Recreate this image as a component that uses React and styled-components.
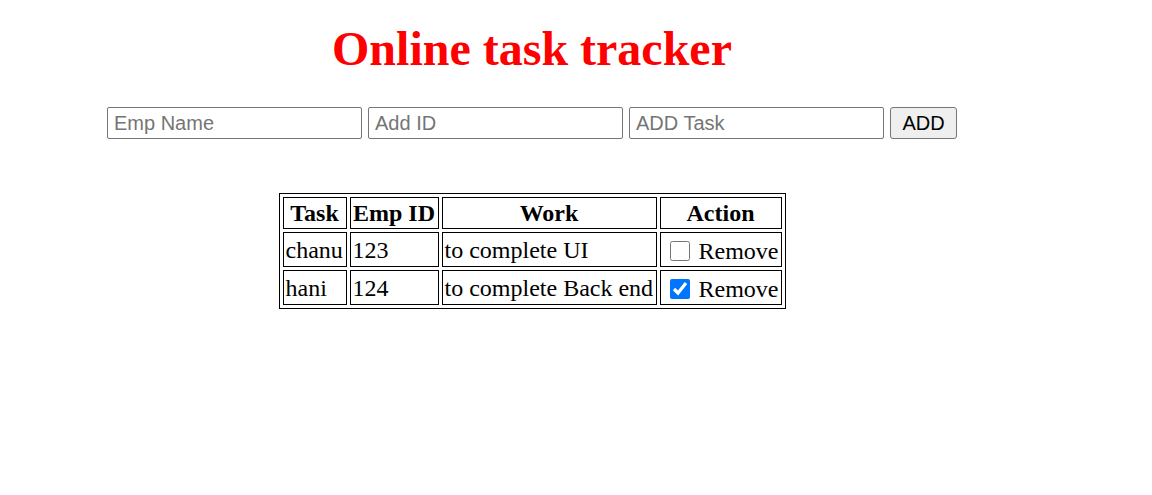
import React, { useState } from "react";
import styled, { createGlobalStyle } from "styled-components";

const Global = createGlobalStyle`
  html, body { margin: 0; padding: 0; background: #fff; }
  body { font-family: "Liberation Serif", "Times New Roman", serif; color: #000; }
`;

const Page = styled.div`
  width: 1040px;
  margin-left: 12px;
  padding-top: 22px;
  display: flex;
  flex-direction: column;
  align-items: center;
`;

const Title = styled.h1`
  margin: 0;
  font-family: "Liberation Serif", "Times New Roman", serif;
  font-size: 48px;
  font-weight: bold;
  line-height: 53px;
  color: #ff0000;
`;

const Form = styled.div`
  margin-top: 32px;
  display: flex;
  gap: 6px;
  align-items: center;
`;

const Input = styled.input`
  box-sizing: border-box;
  width: 255px;
  height: 32px;
  padding: 1px 6px;
  border: 1px solid #767676;
  border-radius: 2px;
  font-family: "Liberation Sans", Arial, sans-serif;
  font-size: 20px;
  color: #000;
  background: #fff;
  &::placeholder { color: #757575; }
`;

const Button = styled.button`
  box-sizing: border-box;
  height: 32px;
  width: 67px;
  padding: 1px 0;
  border: 1px solid #767676;
  border-radius: 3px;
  background: #efefef;
  font-family: "Liberation Sans", Arial, sans-serif;
  font-size: 20px;
  color: #000;
`;

const Table = styled.table`
  margin-top: 54px;
  border: 1px solid #000;
  border-spacing: 3px;
  font-size: 24px;
  font-family: "Liberation Serif", "Times New Roman", serif;
  table-layout: fixed;
`;

const Th = styled.th`
  box-sizing: border-box;
  border: 1px solid #000;
  padding: 1px 1.5px;
  height: 32px;
  width: ${(p) => p.$w}px;
  font-weight: bold;
  text-align: center;
`;

const Td = styled.td`
  box-sizing: border-box;
  border: 1px solid #000;
  padding: 2px 1.5px 1px 2px;
  height: 35px;
  text-align: left;
  white-space: nowrap;
`;

const ActionCell = styled(Td)`
  padding-top: 4px;
  padding-bottom: 0;
`;

const Check = styled.input`
  width: 20px;
  height: 20px;
  margin: 3px 9px 0 7px;
  vertical-align: top;
  accent-color: #0075ff;
`;

const rows = [
  { name: "chanu", id: "123", work: "to complete UI", done: false },
  { name: "hani", id: "124", work: "to complete Back end", done: true },
];

export default function App() {
  const [data, setData] = useState(rows);
  return (
    <>
      <Global />
      <Page>
        <Title>Online task tracker</Title>
        <Form>
          <Input placeholder="Emp Name" />
          <Input placeholder="Add ID" />
          <Input placeholder="ADD Task" />
          <Button>ADD</Button>
        </Form>
        <Table>
          <thead>
            <tr>
              <Th $w={64}>Task</Th>
              <Th $w={89}>Emp ID</Th>
              <Th $w={215}>Work</Th>
              <Th $w={122}>Action</Th>
            </tr>
          </thead>
          <tbody>
            {data.map((r, i) => (
              <tr key={r.id}>
                <Td>{r.name}</Td>
                <Td>{r.id}</Td>
                <Td>{r.work}</Td>
                <ActionCell>
                  <Check
                    type="checkbox"
                    checked={r.done}
                    onChange={() =>
                      setData(data.map((d, j) => (j === i ? { ...d, done: !d.done } : d)))
                    }
                  />
                  Remove
                </ActionCell>
              </tr>
            ))}
          </tbody>
        </Table>
      </Page>
    </>
  );
}
